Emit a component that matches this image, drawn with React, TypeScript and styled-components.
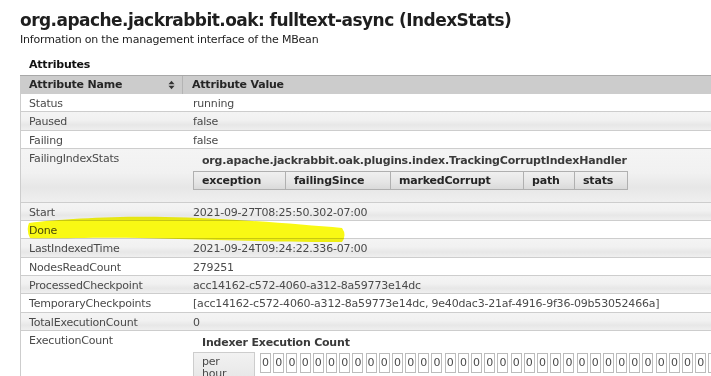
import styled, { createGlobalStyle } from 'styled-components';

const GlobalStyle = createGlobalStyle`
  html, body {
    margin: 0;
    padding: 0;
    background: #fff;
    overflow: hidden;
  }
  body {
    font-family: "DejaVu Sans", Verdana, sans-serif;
    font-size: 11px;
    letter-spacing: -0.2px;
    color: #444;
  }
`;

const Page = styled.div`
  position: relative;
  width: 711px;
  height: 376px;
  overflow: hidden;
  box-sizing: border-box;
  padding: 10px 0 0 20px;
`;

const Title = styled.h1`
  margin: 0;
  font-size: 17px;
  line-height: 20px;
  letter-spacing: -0.55px;
  font-weight: bold;
  color: #1e1e1e;
  white-space: nowrap;
`;

const Subtitle = styled.p`
  margin: 2.7px 0 0;
  line-height: 13px;
  color: #222;
`;

const SectionTitle = styled.div`
  margin-top: 12px;
  padding-left: 9px;
  line-height: 13px;
  font-weight: bold;
  color: #111;
`;

const Grid = styled.div`
  margin-top: 4.3px;
  width: 1000px;
`;

const HeadRow = styled.div`
  display: flex;
  background: #cccccc;
  border-top: 1px solid #a8a8a8;
  font-weight: bold;
  color: #262626;
  line-height: 15.3px;
`;

const HeadName = styled.div`
  width: 163px;
  box-sizing: border-box;
  display: flex;
  align-items: center;
  justify-content: space-between;
  padding: 1.5px 7px 1.2px 9px;
  border-right: 1px solid #b4b4b4;
`;

const HeadValue = styled.div`
  flex: 1;
  padding: 1.5px 9px 1.2px;
`;

const Row = styled.div<{ $shade?: boolean }>`
  display: flex;
  border-bottom: 1px solid #cdcdcd;
  background: ${(p) =>
    p.$shade
      ? 'linear-gradient(to bottom, #f4f4f4 0%, #f1f1f1 45%, #e7e7e7 72%, #efefef 100%)'
      : '#fff'};
  line-height: 15.3px;
`;

const Label = styled.div`
  width: 163px;
  box-sizing: border-box;
  flex-shrink: 0;
  border-left: 1px solid #cdcdcd;
  padding: 2px 0 0 8px;
  color: #4a4a4a;
`;

const Value = styled.div<{ $nested?: boolean }>`
  flex: 1;
  padding: ${(p) => (p.$nested ? '3.7px 0 12.3px 10px' : '2px 0 0 10px')};
  color: #4a4a4a;
  white-space: nowrap;
`;

const NestedCaption = styled.div`
  padding-left: 9px;
  line-height: 16px;
  font-weight: bold;
  color: #3a3a3a;
`;

const NestedHead = styled.div`
  display: flex;
  width: max-content;
  margin-top: 2px;
  border: 1px solid #b0b0b0;
  background: linear-gradient(to bottom, #f0f0f0 0%, #e6e6e6 55%, #dadada 100%);
  font-weight: bold;
  color: #262626;
`;

const NestedCell = styled.div<{ $w: number }>`
  width: ${(p) => p.$w}px;
  box-sizing: border-box;
  padding: 1.4px 0 0.3px 8px;
  line-height: 15.3px;
  & + & {
    border-left: 1px solid #b0b0b0;
  }
`;

const CountTable = styled.div`
  display: flex;
  align-items: flex-start;
  margin-top: 1.5px;
`;

const PerCell = styled.div`
  width: 62px;
  height: 40px;
  box-sizing: border-box;
  flex-shrink: 0;
  border: 1px solid #cdcdcd;
  border-bottom: none;
  padding: 2.5px 0 0 8px;
  line-height: 12.5px;
  color: #4a4a4a;
  background: linear-gradient(to bottom, #f2f2f2 0%, #e8e8e8 60%, #efefef 100%);
`;

const Boxes = styled.div`
  display: flex;
  gap: 2.2px;
  margin: 1px 0 0 5px;
`;

const Box = styled.div`
  width: 11px;
  height: 20px;
  box-sizing: border-box;
  flex-shrink: 0;
  border: 1px solid #bcbcbc;
  text-align: center;
  line-height: 18px;
  color: #4a4a4a;
`;

const Marker = styled.svg`
  position: absolute;
  left: 0;
  top: 0;
  pointer-events: none;
  mix-blend-mode: multiply;
`;

const SortIcon = () => (
  <svg width="7" height="10" viewBox="0 0 7 10">
    <path d="M0.5 4.3 L6.5 4.3 L3.5 0.8 Z" fill="#333" />
    <path d="M0.5 5.7 L6.5 5.7 L3.5 9.2 Z" fill="#333" />
  </svg>
);

type Attr = { name: string; value?: string; shade?: boolean };

const before: Attr[] = [
  { name: 'Status', value: 'running' },
  { name: 'Paused', value: 'false', shade: true },
  { name: 'Failing', value: 'false' },
];

const after: Attr[] = [
  { name: 'Start', value: '2021-09-27T08:25:50.302-07:00', shade: true },
  { name: 'Done', value: '' },
  { name: 'LastIndexedTime', value: '2021-09-24T09:24:22.336-07:00', shade: true },
  { name: 'NodesReadCount', value: '279251' },
  { name: 'ProcessedCheckpoint', value: 'acc14162-c572-4060-a312-8a59773e14dc', shade: true },
  {
    name: 'TemporaryCheckpoints',
    value: '[acc14162-c572-4060-a312-8a59773e14dc, 9e40dac3-21af-4916-9f36-09b53052466a]',
  },
  { name: 'TotalExecutionCount', value: '0', shade: true },
];

const failingCols = [
  { label: 'exception', w: 91 },
  { label: 'failingSince', w: 105 },
  { label: 'markedCorrupt', w: 133 },
  { label: 'path', w: 51 },
  { label: 'stats', w: 53 },
];

const AttrRow = ({ name, value, shade }: Attr) => (
  <Row $shade={shade}>
    <Label>{name}</Label>
    <Value>{value}</Value>
  </Row>
);

export default function App() {
  return (
    <>
      <GlobalStyle />
      <Page>
        <Title>org.apache.jackrabbit.oak: fulltext-async (IndexStats)</Title>
        <Subtitle>Information on the management interface of the MBean</Subtitle>
        <SectionTitle>Attributes</SectionTitle>
        <Grid>
          <HeadRow>
            <HeadName>
              Attribute Name
              <SortIcon />
            </HeadName>
            <HeadValue>Attribute Value</HeadValue>
          </HeadRow>
          {before.map((a) => (
            <AttrRow key={a.name} {...a} />
          ))}
          <Row $shade>
            <Label>FailingIndexStats</Label>
            <Value $nested>
              <NestedCaption>
                org.apache.jackrabbit.oak.plugins.index.TrackingCorruptIndexHandler
              </NestedCaption>
              <NestedHead>
                {failingCols.map((c) => (
                  <NestedCell key={c.label} $w={c.w}>
                    {c.label}
                  </NestedCell>
                ))}
              </NestedHead>
            </Value>
          </Row>
          {after.map((a) => (
            <AttrRow key={a.name} {...a} />
          ))}
          <Row>
            <Label>ExecutionCount</Label>
            <Value $nested>
              <NestedCaption>Indexer Execution Count</NestedCaption>
              <CountTable>
                <PerCell>
                  per
                  <br />
                  hour
                </PerCell>
                <Boxes>
                  {Array.from({ length: 40 }, (_, i) => (
                    <Box key={i}>0</Box>
                  ))}
                </Boxes>
              </CountTable>
            </Value>
          </Row>
        </Grid>
        <Marker width="711" height="376" viewBox="0 0 711 376">
          <path
            d="M29 223 C60 219 115 216 165 217 C225 218 295 224 342 228 Q347 235 342 242 C290 242 210 240 140 238 C95 237 50 239 30 238 Q26 230 29 223 Z"
            fill="#f8f800"
            opacity="0.92"
          />
        </Marker>
      </Page>
    </>
  );
}
